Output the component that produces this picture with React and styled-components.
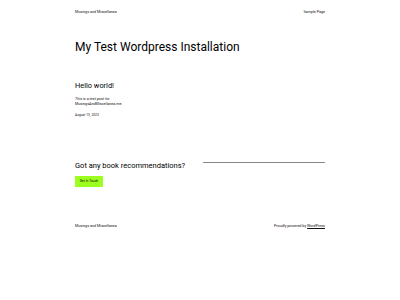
import React from "react"
import styled, { createGlobalStyle } from "styled-components"

const GlobalStyle = createGlobalStyle`
  html, body {
    margin: 0;
    padding: 0;
    background: #ffffff;
  }
  body {
    font-family: Roboto, "Liberation Sans", sans-serif;
    color: #000000;
  }
`

const Page = styled.div`
  width: 400px;
  height: 300px;
  box-sizing: border-box;
  padding: 0 75px;
  display: flex;
  flex-direction: column;
`

const Header = styled.header`
  display: flex;
  justify-content: space-between;
  align-items: center;
  height: 25px;
`

const SmallText = styled.span`
  font-size: 3.7px;
  line-height: 5px;
  color: #111;
`

const SiteTitle = styled.h1`
  margin: 14px 0 0;
  font-size: 12px;
  font-weight: 400;
  line-height: 16px;
  color: #000;
`

const Post = styled.article`
  margin-top: 26px;
  display: flex;
  flex-direction: column;
`

const PostTitle = styled.h2`
  margin: 0;
  font-size: 7.4px;
  font-weight: 400;
  line-height: 10px;
  color: #000;
`

const Excerpt = styled.p`
  margin: 6px 0 0;
  font-size: 3.7px;
  line-height: 5px;
  width: 60px;
  color: #111;
`

const PostDate = styled.div`
  margin-top: 5.5px;
  font-size: 3.3px;
  line-height: 5px;
  color: #111;
`

const Cta = styled.section`
  margin-top: 43.5px;
  display: flex;
  gap: 18px;
`

const CtaText = styled.div`
  display: flex;
  flex-direction: column;
  gap: 4.5px;
`

const CtaHeading = styled.h3`
  margin: 0;
  font-size: 7.5px;
  font-weight: 400;
  line-height: 10px;
  color: #000;
`

const Button = styled.button`
  align-self: flex-start;
  border: none;
  background: #9dff20;
  font-family: inherit;
  font-size: 3.3px;
  padding: 0;
  width: 28px;
  height: 11px;
  color: #000;
`

const Rule = styled.hr`
  flex: 1;
  margin: 1px 0 0;
  align-self: flex-start;
  border: none;
  border-top: 1px solid #888;
`

const Footer = styled.footer`
  margin-top: 37px;
  display: flex;
  justify-content: space-between;
`

const FooterLink = styled.span`
  text-decoration: underline;
`

export default function App() {
  return (
    <>
      <GlobalStyle />
      <Page>
        <Header>
          <SmallText>Musings and Miscellanea</SmallText>
          <SmallText>Sample Page</SmallText>
        </Header>
        <SiteTitle>My Test Wordpress Installation</SiteTitle>
        <Post>
          <PostTitle>Hello world!</PostTitle>
          <Excerpt>This is a test post for MusingsAndMiscellanea.me.</Excerpt>
          <PostDate>August 13, 2023</PostDate>
        </Post>
        <Cta>
          <CtaText>
            <CtaHeading>Got any book recommendations?</CtaHeading>
            <Button>Get In Touch</Button>
          </CtaText>
          <Rule />
        </Cta>
        <Footer>
          <SmallText>Musings and Miscellanea</SmallText>
          <SmallText>
            Proudly powered by <FooterLink>WordPress</FooterLink>
          </SmallText>
        </Footer>
      </Page>
    </>
  )
}
